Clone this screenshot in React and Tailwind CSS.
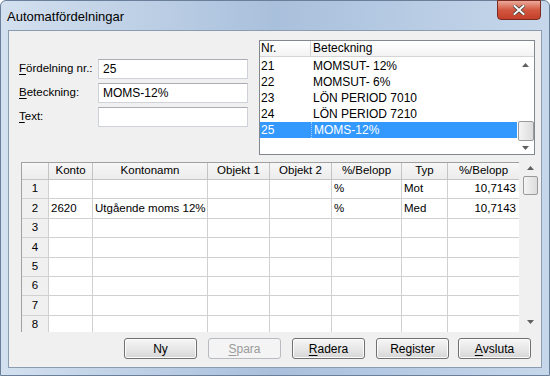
import React from "react";

const F = { fontFamily: '"Liberation Sans", Arial, sans-serif' };

function U({ children }) {
  return <span className="underline underline-offset-2">{children}</span>;
}

function Input({ value }) {
  return (
    <div className="w-[150px] h-[20px] bg-white border border-[#cfd3d9] border-t-[#abadb3] flex items-center px-[4px] text-[12px] text-[#000] whitespace-nowrap">
      {value}
    </div>
  );
}

function UpArrow() {
  return (
    <svg width="7" height="4" viewBox="0 0 7 4"><path d="M0 4 L3.5 0 L7 4 Z" fill="#606060" /></svg>
  );
}
function DownArrow() {
  return (
    <svg width="7" height="4" viewBox="0 0 7 4"><path d="M0 0 L3.5 4 L7 0 Z" fill="#606060" /></svg>
  );
}

const listRows = [
  ["21", "MOMSUT- 12%"],
  ["22", "MOMSUT- 6%"],
  ["23", "LÖN PERIOD 7010"],
  ["24", "LÖN PERIOD 7210"],
  ["25", "MOMS-12%"],
];

const cols = [
  { w: 27, label: "" },
  { w: 44, label: "Konto" },
  { w: 115, label: "Kontonamn" },
  { w: 62, label: "Objekt 1" },
  { w: 62, label: "Objekt 2" },
  { w: 70, label: "%/Belopp" },
  { w: 46, label: "Typ" },
  { w: 72, label: "%/Belopp" },
];

const gridRows = [
  ["1", "", "", "", "", "%", "Mot", "10,7143"],
  ["2", "2620", "Utgående moms 12%", "", "", "%", "Med", "10,7143"],
  ["3", "", "", "", "", "", "", ""],
  ["4", "", "", "", "", "", "", ""],
  ["5", "", "", "", "", "", "", ""],
  ["6", "", "", "", "", "", "", ""],
  ["7", "", "", "", "", "", "", ""],
  ["8", "", "", "", "", "", "", ""],
];

function Button({ children, disabled }) {
  return (
    <div
      className={
        "w-[73px] h-[21px] rounded-[3px] border flex items-center justify-center text-[12px] " +
        (disabled
          ? "border-[#b8bcc0] bg-[#f4f4f4] text-[#9a9a9a]"
          : "border-[#707070] bg-gradient-to-b from-[#f6f6f6] via-[#e8e8e8] to-[#d6d6d6] text-[#000] shadow-[inset_0_0_0_1px_#fcfcfc]")
      }
    >
      {children}
    </div>
  );
}

export default function App() {
  return (
    <div style={F} className="w-[550px] h-[376px] overflow-hidden bg-white">
      <div className="w-[550px] h-[376px] rounded-t-[6px] border border-[#6a7f99] bg-gradient-to-r from-[#d3e0ef] via-[#a9c0dc] to-[#c6d7eb] flex flex-col">
        {/* Title bar */}
        <div className="h-[29px] flex items-start relative">
          <div className="pl-[6px] pt-[6px] text-[13px] text-[#000]">Automatfördelningar</div>
          <div className="absolute right-[8px] top-[-1px] w-[44px] h-[20px] rounded-b-[4px] border border-[#7a2a20] bg-gradient-to-b from-[#e9a89a] via-[#d2573f] to-[#c4402a] flex items-center justify-center">
            <svg width="12" height="10" viewBox="0 0 12 10">
              <path d="M1.5 1 L10.5 9 M10.5 1 L1.5 9" stroke="#3a3a3a" strokeWidth="3.4" strokeLinecap="square" />
              <path d="M1.5 1 L10.5 9 M10.5 1 L1.5 9" stroke="#ffffff" strokeWidth="2" strokeLinecap="square" />
            </svg>
          </div>
        </div>
        {/* Client */}
        <div className="mx-[7px] mb-[7px] flex-1 bg-[#f0f0f0] border border-[#8a9bb2] flex flex-col pt-[9px]">
          <div className="flex h-[115px]">
            <div className="w-[250px] pl-[10px] pt-[19px] flex flex-col gap-[4px] text-[11.5px] text-[#000]">
              <div className="flex items-center">
                <div className="w-[79px] whitespace-nowrap"><U>F</U>ördelning nr.:</div>
                <Input value="25" />
              </div>
              <div className="flex items-center">
                <div className="w-[79px]"><U>B</U>eteckning:</div>
                <Input value="MOMS-12%" />
              </div>
              <div className="flex items-center">
                <div className="w-[79px]"><U>T</U>ext:</div>
                <Input value="" />
              </div>
            </div>
            {/* List */}
            <div className="w-[276px] h-[115px] bg-white border border-[#828790] flex flex-col text-[12px] text-[#000]">
              <div className="h-[16px] flex border-b border-[#d5d5d5] bg-gradient-to-b from-white to-[#f3f3f3]">
                <div className="w-[51px] pl-[1px] border-r border-[#d5d5d5] leading-[15px]">Nr.</div>
                <div className="flex-1 pl-[2px] leading-[15px]">Beteckning</div>
              </div>
              <div className="flex flex-1">
                <div className="flex-1 pt-[1px]">
                  {listRows.map(([n, b], i) => {
                    const sel = i === 4;
                    return (
                      <div key={n} className={"h-[16px] flex leading-[16px] whitespace-nowrap " + (sel ? "bg-[#3399ff] text-white" : "")}>
                        <div className="w-[51px] pl-[1px]">{n}</div>
                        <div className={"flex-1 pl-[2px] " + (sel ? "border-l border-dotted border-[#a0d0ff]" : "")}>{b}</div>
                      </div>
                    );
                  })}
                </div>
                <div className="w-[17px] flex flex-col items-center justify-between pt-[6px] pb-[4px]">
                  <UpArrow />
                  <div className="flex flex-col items-center gap-[5px]">
                    <div className="w-[16px] h-[20px] rounded-[2px] border border-[#9a9a9a] bg-gradient-to-r from-[#f4f4f4] to-[#dcdcdc]" />
                    <DownArrow />
                  </div>
                </div>
              </div>
            </div>
          </div>
          {/* Grid */}
          <div className="flex mt-[7px] ml-[12px] h-[170px]">
            <div className="w-[498px] h-[170px] overflow-hidden border-l border-t border-[#a0a0a0] bg-white text-[11.5px] text-[#000]">
              <div className="flex h-[17px]">
                {cols.map((c, i) => (
                  <div
                    key={i}
                    style={{ width: c.w }}
                    className="shrink-0 h-[17px] bg-gradient-to-b from-[#f7f7f7] to-[#ececec] border-r border-b border-[#c4c4c4] flex items-center justify-center leading-none whitespace-nowrap"
                  >
                    {c.label}
                  </div>
                ))}
              </div>
              {gridRows.map((r, ri) => (
                <div key={ri} className="flex h-[19.4px]">
                  {r.map((v, ci) => {
                    const isHead = ci === 0;
                    const right = ci === 7;
                    return (
                      <div
                        key={ci}
                        style={{ width: cols[ci].w }}
                        className={
                          "shrink-0 border-r border-b border-[#d0d0d0] flex items-center leading-none whitespace-nowrap overflow-hidden " +
                          (isHead
                            ? "bg-[#f0f0f0] justify-center border-[#c4c4c4]"
                            : right
                            ? "justify-end pr-[3px]"
                            : "pl-[2px]")
                        }
                      >
                        {v}
                      </div>
                    );
                  })}
                </div>
              ))}
            </div>
            <div className="w-[16px] ml-[3px] flex flex-col items-center pt-[4px] pb-[8px]">
              <UpArrow />
              <div className="mt-[6px] w-[15px] h-[19px] rounded-[2px] border border-[#9a9a9a] bg-gradient-to-r from-[#f4f4f4] to-[#dcdcdc]" />
              <div className="flex-1" />
              <DownArrow />
            </div>
          </div>
          {/* Buttons */}
          <div className="flex mt-[6px] pl-[115px] gap-[11px]">
            <Button>Ny</Button>
            <Button disabled><U>S</U>para</Button>
            <Button><U>R</U>adera</Button>
            <Button>Register</Button>
            <div className="-ml-[2px]">
              <Button><U>A</U>vsluta</Button>
            </div>
          </div>
        </div>
      </div>
    </div>
  );
}
